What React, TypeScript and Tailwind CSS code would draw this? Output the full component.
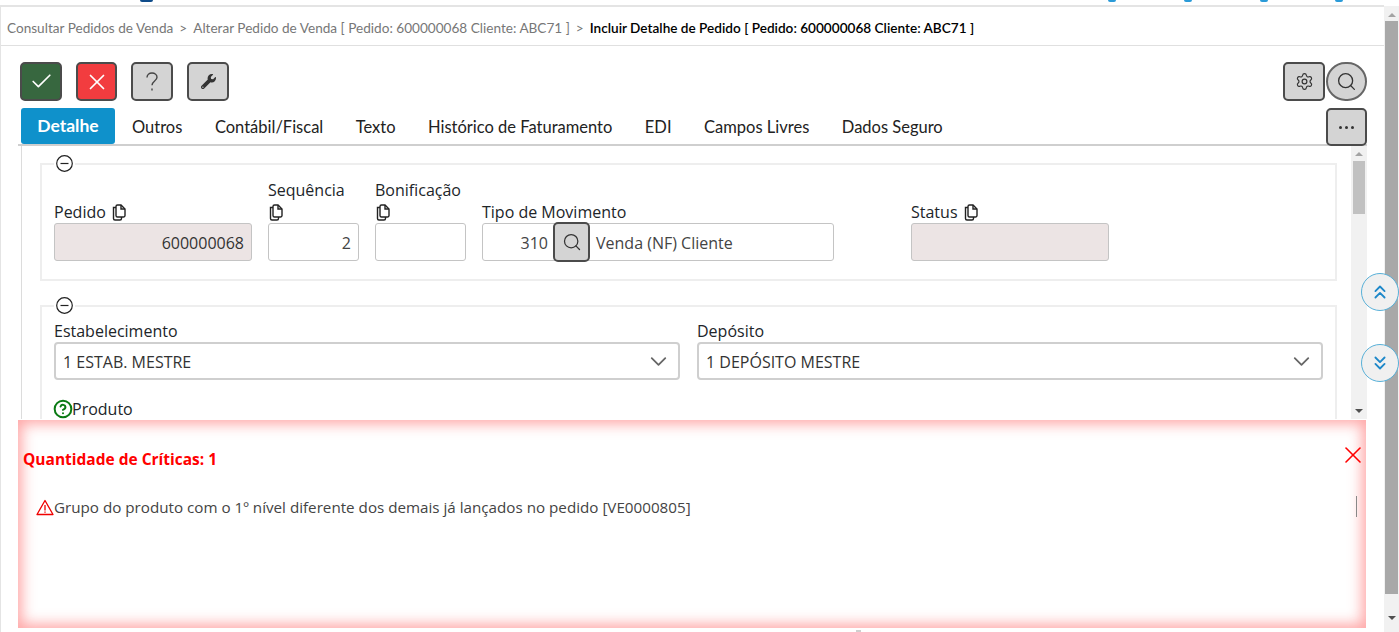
import { Check, ChevronDown, ChevronsDown, ChevronsUp, HelpCircle, Search, Settings, X } from "lucide-react";
import { FaWrench } from "react-icons/fa";

const tabs = ["Outros", "Contábil/Fiscal", "Texto", "Histórico de Faturamento", "EDI", "Campos Livres", "Dados Seguro"];

function CopyIcon() {
  return (
    <svg className="w-[16px] h-[17px] text-[#222]" viewBox="0 0 16 17" fill="none" stroke="currentColor" strokeWidth={1.4}>
      <path d="M5 3.5H2.5v11a1.5 1.5 0 0 0 1.5 1.5h5a1.5 1.5 0 0 0 1.5-1.5V13" />
      <path d="M5 2.5A1.5 1.5 0 0 1 6.500 1H10l4 4v6.500a1.500 1.500 0 0 1-1.500 1.500h-6A1.500 1.500 0 0 1 5 11.500z" />
      <path d="M10 1v4h4" />
    </svg>
  );
}

function MinusCircle() {
  return (
    <svg className="w-[17px] h-[17px] text-[#222]" viewBox="0 0 17 17" fill="none" stroke="currentColor" strokeWidth={1.2}>
      <circle cx="8.500" cy="8.500" r="7.800" />
      <path d="M4.500 8.500h8" />
    </svg>
  );
}

function ToolButton({ className, children }: { className: string; children: React.ReactNode }) {
  return (
    <button className={`h-[39px] flex items-center justify-center border-2 border-[#4b4b4b] rounded-[5px] ${className}`}>
      {children}
    </button>
  );
}

function Legend() {
  return (
    <div className="absolute left-[12px] top-[-10px] bg-white px-[2px]">
      <MinusCircle />
    </div>
  );
}

export default function App() {
  return (
    <div className="relative w-[1399px] h-[632px] overflow-hidden bg-white text-[#212529] font-['Open_Sans','Noto_Sans',sans-serif]">
      <div className="flex h-full">
        {/* Main window */}
        <div className="w-[1384px] flex flex-col">
          <div className="h-[5px]" />
          <div className="flex-1 border-t-2 border-l border-[#e4e4e4] flex flex-col">
            <div className="h-[39px] shrink-0 border-b border-[#e0e0e0] pl-[6px] pt-[4px] flex items-center font-['Lato',sans-serif] text-[13.6px] text-[#777]">
              <span>Consultar Pedidos de Venda</span>
              <span className="mx-[6px]">&gt;</span>
              <span>Alterar Pedido de Venda [ Pedido: 600000068 Cliente: ABC71 ]</span>
              <span className="mx-[6px]">&gt;</span>
              <span className="text-black font-semibold">Incluir Detalhe de Pedido [ Pedido: 600000068 Cliente: ABC71 ]</span>
            </div>

            <div className="flex items-center pl-[19px] pr-[17px] mt-[16px] h-[39px] shrink-0">
              <ToolButton className="w-[42px] bg-[#37673f] text-white">
                <Check size={25} strokeWidth={1.6} />
              </ToolButton>
              <ToolButton className="w-[41px] ml-[14px] bg-[#f23c3f] text-white">
                <X size={26} strokeWidth={1.6} />
              </ToolButton>
              <ToolButton className="w-[42px] ml-[14px] bg-[#d4d4d4] text-[#444]">
                <svg className="w-[12px] h-[20px]" viewBox="0 0 12 20" fill="none" stroke="currentColor" strokeWidth={1.4}>
                  <path d="M1 5.500C1 2.800 3.200 1 6 1s5 1.800 5 4.300c0 3.700-5 3.700-5 8" />
                  <path d="M6 16.500v2" />
                </svg>
              </ToolButton>
              <ToolButton className="w-[42px] ml-[14px] bg-[#d4d4d4] text-[#333]">
                <FaWrench size={15} />
              </ToolButton>
              <ToolButton className="w-[42px] ml-auto bg-[#d4d4d4] text-[#333]">
                <Settings size={19} strokeWidth={1.5} />
              </ToolButton>
              <ToolButton className="w-[41px] ml-[1px] !rounded-full bg-[#d4d4d4] text-[#333] !border-[#666]">
                <Search size={21} strokeWidth={1.5} />
              </ToolButton>
            </div>

            <div className="relative ml-[17px] mr-[17px] mt-[7px] h-[38px] shrink-0 border-b-2 border-[#cfcfcf] flex items-start pl-[3px] font-['Lato',sans-serif] text-[16.5px] text-[#222]">
              <div className="w-[94px] h-[36px] bg-[#0f91cb] rounded-[3px] text-white text-[17.5px] font-bold flex items-center justify-center pt-[1px]">
                Detalhe
              </div>
              <div className="flex gap-[32.5px] ml-[17px] h-[36px] pt-[2px] items-center">
                {tabs.map((tab) => (
                  <span key={tab}>{tab}</span>
                ))}
              </div>
              <button className="ml-auto w-[41px] h-[38px] flex items-center justify-center gap-[3px] bg-[#d4d4d4] border-2 border-[#4b4b4b] rounded-[5px]">
                <span className="w-[3px] h-[3px] rounded-full bg-[#333]" />
                <span className="w-[3px] h-[3px] rounded-full bg-[#333]" />
                <span className="w-[3px] h-[3px] rounded-full bg-[#333]" />
              </button>
            </div>

            {/* Form area */}
            <div className="ml-[20px] mr-[17px] h-[273px] shrink-0 flex border-l border-[#dcdcdc] overflow-hidden text-[16px]">
              <div className="flex-1 pl-[18px] pr-[14px] pt-[17px]">
                <div className="relative h-[118px] border-2 border-[#eeeeee] pl-[12px]">
                  <Legend />
                  <div className="flex items-end h-[96px]">
                    <div className="w-[198px]">
                      <div className="flex items-center gap-[5px] h-[24px] pt-[2px]">
                        Pedido <CopyIcon />
                      </div>
                      <div className="h-[38px] bg-[#ece4e4] border border-[#c4c4c4] rounded-[3px] flex items-center justify-end pr-[7px] pt-[2px] text-[#333]">
                        600000068
                      </div>
                    </div>
                    <div className="w-[91px] ml-[16px]">
                      <div className="h-[22px] leading-[22px]">Sequência</div>
                      <div className="h-[22px] flex items-center"><CopyIcon /></div>
                      <div className="h-[38px] border border-[#c4c4c4] rounded-[3px] flex items-center justify-end pr-[7px] pt-[2px] text-[#444]">
                        2
                      </div>
                    </div>
                    <div className="w-[91px] ml-[16px]">
                      <div className="h-[22px] leading-[22px]">Bonificação</div>
                      <div className="h-[22px] flex items-center"><CopyIcon /></div>
                      <div className="h-[38px] border border-[#c4c4c4] rounded-[3px]" />
                    </div>
                    <div className="w-[352px] ml-[16px]">
                      <div className="h-[24px] leading-[27px]">Tipo de Movimento</div>
                      <div className="h-[38px] border border-[#c4c4c4] rounded-[3px] flex items-center text-[#444]">
                        <span className="w-[65px] text-right pt-[1px]">310</span>
                        <button className="w-[37px] h-[40px] ml-[5px] bg-[#d4d4d4] border-2 border-[#4b4b4b] rounded-[5px] flex items-center justify-center text-[#333]">
                          <Search size={20} strokeWidth={1.5} />
                        </button>
                        <span className="ml-[6px] pt-[1px]">Venda (NF) Cliente</span>
                      </div>
                    </div>
                    <div className="w-[198px] ml-[77px]">
                      <div className="flex items-center gap-[5px] h-[24px] pt-[2px]">
                        Status <CopyIcon />
                      </div>
                      <div className="h-[38px] bg-[#ece4e4] border border-[#c4c4c4] rounded-[3px]" />
                    </div>
                  </div>
                </div>

                <div className="relative h-[200px] mt-[24px] border-2 border-[#eeeeee] pl-[12px] pr-[12px]">
                  <Legend />
                  <div className="flex gap-[17px] pt-[12px]">
                    <div className="w-[626px]">
                      <div className="h-[23px] leading-[25px]">Estabelecimento</div>
                      <div className="h-[38px] border-2 border-[#cfcfcf] rounded-[4px] flex items-center justify-between pl-[7px] pr-[6px] text-[#333]">
                        <span className="pt-[2px]">1 ESTAB. MESTRE</span>
                        <ChevronDown size={27} strokeWidth={1.6} className="text-[#666]" />
                      </div>
                    </div>
                    <div className="w-[626px]">
                      <div className="h-[23px] leading-[25px]">Depósito</div>
                      <div className="h-[38px] border-2 border-[#cfcfcf] rounded-[4px] flex items-center justify-between pl-[7px] pr-[6px] text-[#333]">
                        <span className="pt-[2px]">1 DEPÓSITO MESTRE</span>
                        <ChevronDown size={27} strokeWidth={1.6} className="text-[#666]" />
                      </div>
                    </div>
                  </div>
                  <div className="flex items-center mt-[19px] h-[20px]">
                    <HelpCircle size={20} strokeWidth={2.4} className="text-[#0a7a14] -ml-[1px] -mr-[2px]" />
                    <span className="ml-[1px]">Produto</span>
                  </div>
                </div>
              </div>

              {/* Inner scrollbar */}
              <div className="w-[16px] bg-[#f1f1f1] relative shrink-0">
                <div className="mx-auto mt-[6px] w-0 h-0 border-x-[4px] border-x-transparent border-b-[4px] border-b-[#a3a3a3]" />
                <div className="absolute left-[2px] right-[2px] top-[15px] h-[53px] bg-[#c1c1c1]" />
              </div>
            </div>
          </div>
        </div>

        {/* Page scrollbar */}
        <div className="w-[15px] mt-[6px] bg-[#f1f1f1] relative">
          <div className="mx-auto mt-[7px] w-0 h-0 border-x-[4px] border-x-transparent border-b-[4px] border-b-[#a3a3a3]" />
          <div className="absolute left-[1px] right-[1px] top-[15px] h-[573px] bg-[#a8a8a8]" />
          <div className="absolute left-[4px] bottom-[12px] w-0 h-0 border-x-[4px] border-x-transparent border-t-[4px] border-t-[#505050]" />
        </div>
      </div>

      {/* Blue bits of the header cut off at the top */}
      <div className="absolute left-[140px] top-0 w-[13px] h-[2px] rounded-b-full bg-[#0f4c8a]" />
      <div className="absolute left-[1108px] top-0 w-[8px] h-[2px] rounded-b-full bg-[#2b9bd8]" />
      <div className="absolute left-[1184px] top-0 w-[8px] h-[2px] rounded-b-full bg-[#2b9bd8]" />
      <div className="absolute left-[1260px] top-0 w-[8px] h-[2px] rounded-b-full bg-[#2b9bd8]" />
      <div className="absolute left-[1335px] top-0 w-[8px] h-[2px] rounded-b-full bg-[#2b9bd8]" />

      {/* Scroll-jump buttons */}
      <button className="absolute left-[1361px] top-[273px] w-[38px] h-[38px] rounded-full bg-[#f0f0f0] border border-[#58b0d8] flex items-center justify-center text-[#1e88c9]">
        <ChevronsUp size={22} strokeWidth={2} />
      </button>
      <button className="absolute left-[1361px] top-[344px] w-[38px] h-[38px] rounded-full bg-[#f0f0f0] border border-[#58b0d8] flex items-center justify-center text-[#1e88c9]">
        <ChevronsDown size={22} strokeWidth={2} />
      </button>

      {/* Inner scrollbar arrow above the alert */}
      <div className="absolute left-[1355px] top-[409px] w-0 h-0 border-x-[4px] border-x-transparent border-t-[4px] border-t-[#505050]" />

      {/* Critics alert */}
      <div className="absolute left-[18px] top-[420px] w-[1348px] h-[208px] bg-white shadow-[inset_0_0_14px_4px_rgba(255,120,120,0.65)]">
        <div className="absolute left-[5px] top-[28px] text-[15.5px] leading-[22px] font-bold text-[#ff0000]">
          Quantidade de Críticas: 1
        </div>
        <X size={28} strokeWidth={1.4} className="absolute left-[1321px] top-[21px] text-[#ff0000]" />
        <div className="absolute left-[18px] top-[76px] flex items-center h-[22px] text-[15.2px] text-[#444]">
          <svg className="w-[18px] h-[17px]" viewBox="0 0 18 17" fill="none" stroke="#f00000" strokeWidth={1.3}>
            <path d="M9 1.500 17 15.500H1z" strokeLinejoin="round" />
            <path d="M9 6v5.500M9 12.500v1.200" />
          </svg>
          Grupo do produto com o 1º nível diferente dos demais já lançados no pedido [VE0000805]
        </div>
        <div className="absolute left-[1338px] top-[76px] w-[1px] h-[21px] bg-[#888]" />
      </div>

      {/* Sliver under the alert */}
      <div className="absolute left-[856px] top-[630px] w-[5px] h-[2px] bg-[#cfcfcf]" />
    </div>
  );
}
